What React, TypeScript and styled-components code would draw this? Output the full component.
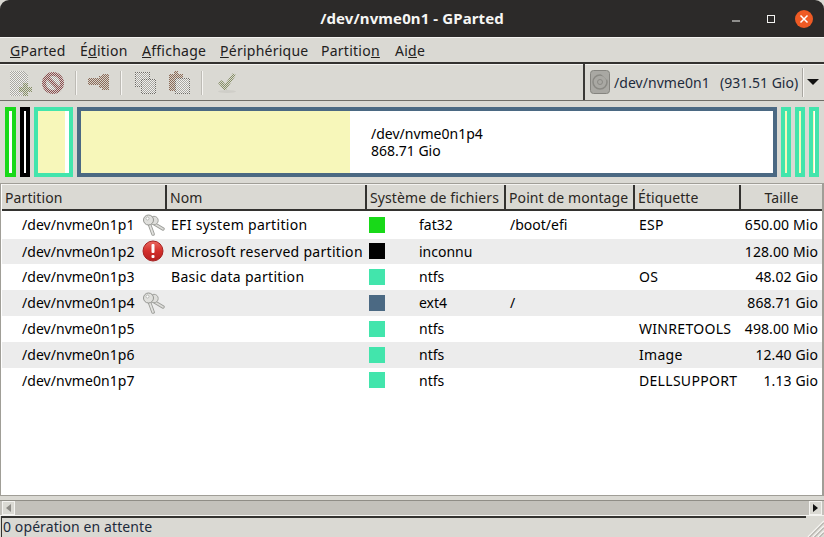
import React from 'react';
import styled, { createGlobalStyle } from 'styled-components';

const GlobalStyle = createGlobalStyle`
  html, body { margin: 0; padding: 0; background: #ffffff; overflow: hidden; }
  body { font-family: 'Noto Sans', 'Open Sans', sans-serif; font-size: 14px; color: #000; }
`;

const Window = styled.div`
  width: 824px;
  height: 537px;
  display: flex;
  flex-direction: column;
  background: #dad9d3;
  overflow: hidden;
`;

const TitleBar = styled.div`
  height: 37px;
  flex: none;
  box-sizing: border-box;
  padding-bottom: 1px;
  background: #2c2a29;
  border-radius: 9px 9px 0 0;
  display: flex;
  align-items: center;
  justify-content: center;
  position: relative;
`;

const TitleText = styled.div`
  color: #f6f6f4;
  font-size: 15px;
  font-weight: 700;
  letter-spacing: 0.1px;
`;

const WindowButtons = styled.div`
  position: absolute;
  right: 11px;
  top: 10px;
  display: flex;
  align-items: center;
`;

const MinimizeGlyph = styled.svg`
  margin-right: 25px;
`;

const MaximizeGlyph = styled.svg`
  margin-right: 19px;
`;

const MenuBar = styled.div`
  height: 27px;
  flex: none;
  box-sizing: border-box;
  display: flex;
  align-items: center;
  padding: 1px 0 0 10px;
  border-top: 1px solid #f4f3f0;
  border-bottom: 2px solid #33322f;
  box-shadow: 0 1px 0 #f4f3f0;
`;

const MenuItem = styled.div<{ $w: number }>`
  width: ${(p) => p.$w}px;
  flex: none;
  white-space: nowrap;
  color: #22201d;
  letter-spacing: 0.25px;
`;

const ToolBar = styled.div`
  height: 36px;
  flex: none;
  box-sizing: border-box;
  display: flex;
  align-items: stretch;
  border-bottom: 1px solid #6f6d67;
  margin-top: 1px;
`;

const Tools = styled.div`
  width: 583px;
  flex: none;
  display: flex;
  align-items: center;
  padding-left: 10px;
  box-sizing: border-box;
`;

const ToolSep = styled.div<{ $after: number }>`
  width: 2px;
  height: 24px;
  box-sizing: border-box;
  background: #f6f5f2;
  border-left: 1px solid #bdbbb5;
  margin: 0 ${(p) => p.$after}px 0 11px;
`;

const NewGlyph = styled.svg`
  margin-right: 10px;
`;

const CopyGlyph = styled.svg`
  margin-right: 13px;
`;

const DevicePicker = styled.div`
  flex: 1;
  display: flex;
  align-items: center;
  border-left: 2px solid #3a3936;
  padding-left: 5px;
  box-sizing: border-box;
  margin-top: -1px;
`;

const DeviceName = styled.span`
  margin-left: 4px;
  width: 106px;
  color: #1d2b3c;
  letter-spacing: 0.05px;
`;

const DeviceSize = styled.span`
  width: 81px;
  white-space: nowrap;
  color: #1d2b3c;
`;

const DeviceSep = styled.div`
  width: 2px;
  height: 29px;
  box-sizing: border-box;
  background: #f6f5f2;
  border-left: 1px solid #a8a6a0;
  margin-left: 1px;
`;

const DeviceArrow = styled.div`
  margin-left: 3px;
  width: 0;
  height: 0;
  border-left: 6px solid transparent;
  border-right: 6px solid transparent;
  border-top: 6px solid #111;
`;

const MapRow = styled.div`
  height: 70px;
  flex: none;
  margin: 6px 0 6px 5px;
  display: flex;
  align-items: stretch;
`;

const MapPart = styled.div<{ $w: number; $color: string; $after: number }>`
  width: ${(p) => p.$w}px;
  margin-right: ${(p) => p.$after}px;
  flex: none;
  box-sizing: border-box;
  border: 4px solid ${(p) => p.$color};
  background: #ffffff;
  display: flex;
`;

const MapUsed = styled.div<{ $w: number }>`
  width: ${(p) => p.$w}px;
  flex: none;
  background: #f7f7ba;
`;

const MapLabel = styled.div`
  margin: auto 0 auto 21px;
  color: #000;
`;

const MapLine = styled.div`
  height: 17px;
  line-height: 17px;
  white-space: nowrap;
`;

const TreeFrame = styled.div`
  height: 313px;
  flex: none;
  border: 1px solid #a09e97;
  border-right-width: 2px;
  padding-left: 1px;
  box-sizing: border-box;
  background: #ffffff;
  display: flex;
  flex-direction: column;
`;

const COLUMNS = '165px 200px 139px 129px 106px 1fr';

const HeaderRow = styled.div`
  height: 27px;
  flex: none;
  display: grid;
  grid-template-columns: ${COLUMNS};
  background: #dad9d3;
  border-bottom: 2px solid #33322f;
  box-sizing: border-box;
  border-top: 1px solid #f4f3f0;
`;

const HeaderCell = styled.div<{ $center?: boolean }>`
  display: flex;
  align-items: center;
  justify-content: ${(p) => (p.$center ? 'center' : 'flex-start')};
  padding: 0 ${(p) => (p.$center ? 3 : 0)}px 0 3px;
  border-right: 2px solid #33322f;
  box-sizing: border-box;
  color: #2a2723;
  white-space: nowrap;
  letter-spacing: 0.1px;
  &:last-child { border-right: none; }
`;

const Row = styled.div<{ $alt: boolean; $h: number }>`
  height: ${(p) => p.$h}px;
  flex: none;
  box-sizing: border-box;
  padding-bottom: 1px;
  display: grid;
  grid-template-columns: ${COLUMNS};
  align-items: center;
  background: ${(p) => (p.$alt ? '#ececec' : '#ffffff')};
  white-space: nowrap;
`;

const PartitionCell = styled.div`
  display: flex;
  align-items: center;
  padding-left: 20px;
`;

const PartitionName = styled.span`
  width: 120px;
  flex: none;
  letter-spacing: 0.05px;
`;

const TextCell = styled.div<{ $track?: number }>`
  padding-left: 4px;
  letter-spacing: ${(p) => p.$track ?? 0}px;
`;

const FsCell = styled.div`
  display: flex;
  align-items: center;
  padding-left: 2px;
`;

const FsSwatch = styled.div<{ $color: string }>`
  width: 16px;
  height: 16px;
  flex: none;
  background: ${(p) => p.$color};
  margin-right: 34px;
`;

const SizeCell = styled.div`
  text-align: right;
  padding-right: 4px;
  letter-spacing: 0.1px;
`;

const ScrollBar = styled.div`
  height: 16px;
  flex: none;
  margin-top: 4px;
  display: flex;
  align-items: stretch;
  justify-content: space-between;
  background: #c3c1bb;
  border-top: 1px solid #8f8d86;
  border-bottom: 1px solid #f4f3f0;
  box-sizing: border-box;
  padding: 0 2px;
`;

const ScrollButton = styled.div`
  width: 13px;
  background: #dad9d3;
  display: flex;
  align-items: center;
  justify-content: center;
  box-shadow: inset 0 0 0 1px #f4f3f0;
`;

const ArrowLeft = styled.div`
  width: 0;
  height: 0;
  border-top: 4px solid transparent;
  border-bottom: 4px solid transparent;
  border-right: 5px solid #8c8a85;
`;

const ArrowRight = styled.div`
  width: 0;
  height: 0;
  border-top: 4px solid transparent;
  border-bottom: 4px solid transparent;
  border-left: 5px solid #111;
`;

const StatusBar = styled.div`
  flex: 1;
  display: flex;
  align-items: stretch;
`;

const StatusText = styled.div`
  flex: 1;
  border-top: 2px solid #33322f;
  border-left: 1px solid #33322f;
  padding-left: 1px;
  color: #1d2b3c;
  line-height: 18px;
  margin-left: 1px;
  letter-spacing: 0.1px;
  white-space: nowrap;
`;

const Grip = styled.div`
  width: 18px;
  flex: none;
  display: flex;
  align-items: flex-end;
`;

const Stipple = ({ id, color, light = '#e8e7e3' }: { id: string; color: string; light?: string }) => (
  <pattern id={id} width="2" height="2" patternUnits="userSpaceOnUse">
    <rect width="2" height="2" fill={light} />
    <rect width="1" height="1" fill={color} />
    <rect x="1" y="1" width="1" height="1" fill={color} />
  </pattern>
);

const NewIcon = () => (
  <NewGlyph width="22" height="26" viewBox="0 0 22 26" shapeRendering="crispEdges">
    <defs>
      <Stipple id="sGrey" color="#a8a7a2" light="#f2f1ee" />
      <Stipple id="sDark" color="#6d6b66" />
      <Stipple id="sRed" color="#8a4a4c" light="#d6d2cc" />
      <Stipple id="sBrown" color="#8a6a58" light="#d8d4cc" />
      <Stipple id="sGreen" color="#858c68" light="#dbdcd0" />
    </defs>
    <path d="M0 1h13l5 5v20H0z" fill="url(#sGrey)" />
    <path d="M9 17h4v-4h5v4h4v5h-4v4h-5v-4H9z" fill="url(#sGreen)" />
  </NewGlyph>
);

const StopIcon = () => (
  <svg width="22" height="24" viewBox="0 0 22 24">
    <circle cx="11" cy="12" r="9" fill="url(#sGrey)" stroke="url(#sRed)" strokeWidth="4" />
    <path d="M5 6l12 12" stroke="url(#sRed)" strokeWidth="4" />
  </svg>
);

const ArrowIcon = () => (
  <svg width="22" height="17" viewBox="0 0 22 17" shapeRendering="crispEdges">
    <path d="M1 4h11V2h3V0h7v16h-7v-2h-3v-3H1z" fill="url(#sBrown)" />
  </svg>
);

const CopyIcon = () => (
  <CopyGlyph width="21" height="22" viewBox="0 0 21 22" shapeRendering="crispEdges">
    <rect x="0.5" y="0.5" width="14" height="14" fill="url(#sGrey)" stroke="url(#sDark)" />
    <rect x="6.5" y="7.5" width="14" height="14" fill="url(#sGrey)" stroke="url(#sDark)" />
  </CopyGlyph>
);

const PasteIcon = () => (
  <svg width="21" height="23" viewBox="0 0 21 23" shapeRendering="crispEdges">
    <path d="M0 3h5V0h4v3h5v17H0z" fill="url(#sBrown)" />
    <rect x="6.5" y="7.5" width="14" height="15" fill="url(#sGrey)" stroke="url(#sDark)" />
  </svg>
);

const CheckIcon = () => (
  <svg width="20" height="22" viewBox="0 0 20 22">
    <ellipse cx="10" cy="19.5" rx="9" ry="1.5" fill="#cfcec8" />
    <path d="M1 11l4-3 3 4 8-11 3 2-10 15H7z" fill="url(#sGreen)" />
  </svg>
);

const DiskIcon = () => (
  <svg width="20" height="24" viewBox="0 0 20 24">
    <rect x="0.5" y="0.5" width="19" height="23" rx="3" fill="#a9a8a3" stroke="#85847f" />
    <circle cx="10" cy="12" r="7" fill="none" stroke="#8a8984" strokeWidth="1.5" />
    <circle cx="10" cy="12" r="2.5" fill="none" stroke="#8a8984" />
    <path d="M12 3l6 6" stroke="#a9a8a3" strokeWidth="3" />
  </svg>
);

const KeyIcon = () => (
  <svg width="23" height="22" viewBox="0 0 23 22">
    <path d="M11 9l10 6" stroke="#9b9c98" strokeWidth="3.4" strokeLinecap="round" />
    <path d="M11 9l10 6" stroke="#dcdcd9" strokeWidth="1.6" strokeLinecap="round" />
    <path d="M7 9l4 11" stroke="#9b9c98" strokeWidth="3.6" strokeLinecap="round" />
    <path d="M7 9l4 11" stroke="#e2e2df" strokeWidth="1.8" strokeLinecap="round" />
    <circle cx="12" cy="6.5" r="4.2" fill="#dededb" stroke="#a2a39f" />
    <circle cx="6.5" cy="6" r="5" fill="#e0e0dd" stroke="#959692" />
    <circle cx="5.5" cy="4.5" r="1.5" fill="#ffffff" stroke="#a2a39f" strokeWidth="0.7" />
  </svg>
);

const ErrorIcon = () => (
  <svg width="22" height="22" viewBox="0 0 22 22">
    <defs>
      <linearGradient id="errFill" x1="0" y1="0" x2="0" y2="1">
        <stop offset="0" stopColor="#ea6a62" />
        <stop offset="0.5" stopColor="#d42f2b" />
        <stop offset="1" stopColor="#b32020" />
      </linearGradient>
    </defs>
    <circle cx="11" cy="11" r="10" fill="url(#errFill)" stroke="#a82222" />
    <rect x="9.5" y="4" width="3" height="9" rx="1" fill="#fff" />
    <rect x="9.5" y="15" width="3" height="3" rx="1" fill="#fff" />
  </svg>
);

const rows = [
  { part: '/dev/nvme0n1p1', icon: 'key', nom: 'EFI system partition', color: '#18d918', fs: 'fat32', mount: '/boot/efi', label: 'ESP', size: '650.00 Mio', h: 28 },
  { part: '/dev/nvme0n1p2', icon: 'err', nom: 'Microsoft reserved partition', color: '#000000', fs: 'inconnu', mount: '', label: '', size: '128.00 Mio', h: 25 },
  { part: '/dev/nvme0n1p3', icon: '', nom: 'Basic data partition', color: '#42e5ac', fs: 'ntfs', mount: '', label: 'OS', size: '48.02 Gio', h: 26 },
  { part: '/dev/nvme0n1p4', icon: 'key', nom: '', color: '#4b6983', fs: 'ext4', mount: '/', label: '', size: '868.71 Gio', h: 26 },
  { part: '/dev/nvme0n1p5', icon: '', nom: '', color: '#42e5ac', fs: 'ntfs', mount: '', label: 'WINRETOOLS', size: '498.00 Mio', h: 26 },
  { part: '/dev/nvme0n1p6', icon: '', nom: '', color: '#42e5ac', fs: 'ntfs', mount: '', label: 'Image', size: '12.40 Gio', h: 26 },
  { part: '/dev/nvme0n1p7', icon: '', nom: '', color: '#42e5ac', fs: 'ntfs', mount: '', label: 'DELLSUPPORT', size: '1.13 Gio', h: 25 },
];

export default function App() {
  return (
    <Window>
      <GlobalStyle />
      <TitleBar>
        <TitleText>/dev/nvme0n1 - GParted</TitleText>
        <WindowButtons>
          <MinimizeGlyph width="10" height="10" viewBox="0 0 10 10">
            <rect x="1" y="6.5" width="8" height="1" fill="#f2f2f0" />
          </MinimizeGlyph>
          <MaximizeGlyph width="10" height="10" viewBox="0 0 10 10">
            <rect x="1.5" y="1.5" width="7" height="7" fill="none" stroke="#f2f2f0" />
          </MaximizeGlyph>
          <svg width="18" height="18" viewBox="0 0 18 18">
            <circle cx="9" cy="9" r="9" fill="#ee5a24" />
            <path d="M5.5 5.5l7 7M12.5 5.5l-7 7" stroke="#fff" strokeWidth="1.5" />
          </svg>
        </WindowButtons>
      </TitleBar>
      <MenuBar>
        <MenuItem $w={70}><u>G</u>Parted</MenuItem>
        <MenuItem $w={62}>É<u>d</u>ition</MenuItem>
        <MenuItem $w={78}><u>A</u>ffichage</MenuItem>
        <MenuItem $w={101}><u>P</u>ériphérique</MenuItem>
        <MenuItem $w={74}>Partitio<u>n</u></MenuItem>
        <MenuItem $w={40}>Ai<u>d</u>e</MenuItem>
      </MenuBar>
      <ToolBar>
        <Tools>
          <NewIcon />
          <StopIcon />
          <ToolSep $after={10} />
          <ArrowIcon />
          <ToolSep $after={13} />
          <CopyIcon />
          <PasteIcon />
          <ToolSep $after={14} />
          <CheckIcon />
        </Tools>
        <DevicePicker>
          <DiskIcon />
          <DeviceName>/dev/nvme0n1</DeviceName>
          <DeviceSize>(931.51 Gio)</DeviceSize>
          <DeviceSep />
          <DeviceArrow />
        </DevicePicker>
      </ToolBar>
      <MapRow>
        <MapPart $w={11} $color="#18d918" $after={4} />
        <MapPart $w={10} $color="#000000" $after={4} />
        <MapPart $w={39} $color="#42e5ac" $after={4}>
          <MapUsed $w={27} />
        </MapPart>
        <MapPart $w={700} $color="#4b6983" $after={4}>
          <MapUsed $w={269} />
          <MapLabel>
            <MapLine>/dev/nvme0n1p4</MapLine>
            <MapLine>868.71 Gio</MapLine>
          </MapLabel>
        </MapPart>
        <MapPart $w={10} $color="#42e5ac" $after={4}>
          <MapUsed $w={2} />
        </MapPart>
        <MapPart $w={10} $color="#42e5ac" $after={4}>
          <MapUsed $w={2} />
        </MapPart>
        <MapPart $w={10} $color="#42e5ac" $after={0}>
          <MapUsed $w={1} />
        </MapPart>
      </MapRow>
      <TreeFrame>
        <HeaderRow>
          <HeaderCell>Partition</HeaderCell>
          <HeaderCell>Nom</HeaderCell>
          <HeaderCell>Système de fichiers</HeaderCell>
          <HeaderCell>Point de montage</HeaderCell>
          <HeaderCell>Étiquette</HeaderCell>
          <HeaderCell $center>Taille</HeaderCell>
        </HeaderRow>
        {rows.map((r, i) => (
          <Row key={r.part} $alt={i % 2 === 1} $h={r.h}>
            <PartitionCell>
              <PartitionName>{r.part}</PartitionName>
              {r.icon === 'key' && <KeyIcon />}
              {r.icon === 'err' && <ErrorIcon />}
            </PartitionCell>
            <TextCell $track={0.3}>{r.nom}</TextCell>
            <FsCell>
              <FsSwatch $color={r.color} />
              {r.fs}
            </FsCell>
            <TextCell>{r.mount}</TextCell>
            <TextCell $track={0.3}>{r.label}</TextCell>
            <SizeCell>{r.size}</SizeCell>
          </Row>
        ))}
      </TreeFrame>
      <ScrollBar>
        <ScrollButton><ArrowLeft /></ScrollButton>
        <ScrollButton><ArrowRight /></ScrollButton>
      </ScrollBar>
      <StatusBar>
        <StatusText>0 opération en attente</StatusText>
        <Grip>
          <svg width="18" height="19" viewBox="0 0 18 19">
            <path d="M2 19L18 3M7 19L18 8M12 19l6-6" stroke="#f4f3f0" strokeWidth="1.5" />
            <path d="M3.5 19L18 4.5M8.5 19L18 9.5M13.5 19l4.5-4.5" stroke="#9d9b95" strokeWidth="1" />
          </svg>
        </Grip>
      </StatusBar>
    </Window>
  );
}
